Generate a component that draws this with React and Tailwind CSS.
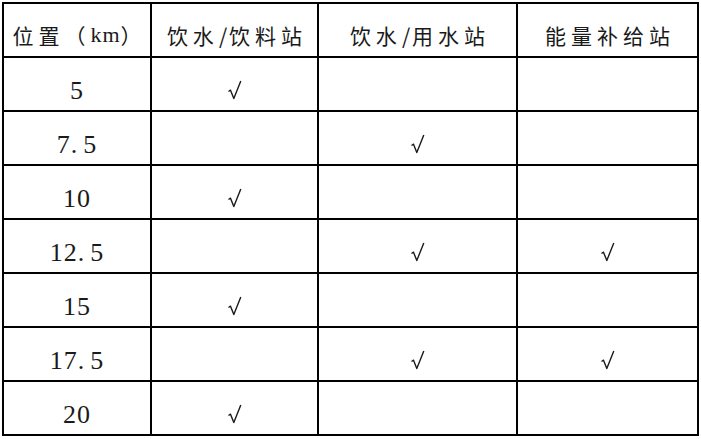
import React from 'react';

const rows = [
  { km: '5', c: [true, false, false] },
  { km: '7.5', c: [false, true, false] },
  { km: '10', c: [true, false, false] },
  { km: '12.5', c: [false, true, true] },
  { km: '15', c: [true, false, false] },
  { km: '17.5', c: [false, true, true] },
  { km: '20', c: [true, false, false] },
];

// √ 勾号
const Check = () => (
  <svg width="15" height="20" viewBox="0 0 15 20" fill="none" stroke="#1a1a1a" strokeWidth="1.4" strokeLinejoin="round">
    <path d="M1.5 11.5 L3.5 10.2 L6.8 18.5 L13.8 1" />
  </svg>
);

const cell = 'h-[54px] border-r-2 border-b-2 border-black flex items-center justify-center';
const headCls = `${cell} pt-[10px] pl-[5px] text-[21px] tracking-[5px] leading-none`;
const cjk = { fontFamily: '"Noto Sans CJK SC", sans-serif' };

export default function App() {
  return (
    <div className="w-[701px] h-[439px] bg-white overflow-hidden">
      <div className="ml-[2px] mt-[2px] inline-grid grid-cols-[148px_167px_199px_181px] border-l-2 border-t-2 border-black text-[#1a1a1a]">
        <div className={headCls} style={cjk}>
          位置（<span className="tracking-[1px] text-[22px]" style={{ fontFamily: '"Liberation Serif", serif' }}>km</span>）
        </div>
        <div className={headCls} style={cjk}>
          饮水<span className="tracking-[2px]">/</span>饮料站
        </div>
        <div className={headCls} style={cjk}>
          饮水<span className="tracking-[2px]">/</span>用水站
        </div>
        <div className={headCls} style={cjk}>
          能量补给站
        </div>
        {rows.map((r) => (
          <React.Fragment key={r.km}>
            <div
              className={`${cell} pt-[14px] text-[26px] tracking-[1px] leading-none`}
              style={{ fontFamily: '"Liberation Serif", serif' }}
            >
              {r.km.includes('.') ? (
                <span>
                  {r.km.split('.')[0]}.<span className="ml-[5px]">{r.km.split('.')[1]}</span>
                </span>
              ) : (
                r.km
              )}
            </div>
            {r.c.map((v, i) => (
              <div key={i} className={`${cell} pt-[12px]`}>
                {v && <Check />}
              </div>
            ))}
          </React.Fragment>
        ))}
      </div>
    </div>
  );
}
